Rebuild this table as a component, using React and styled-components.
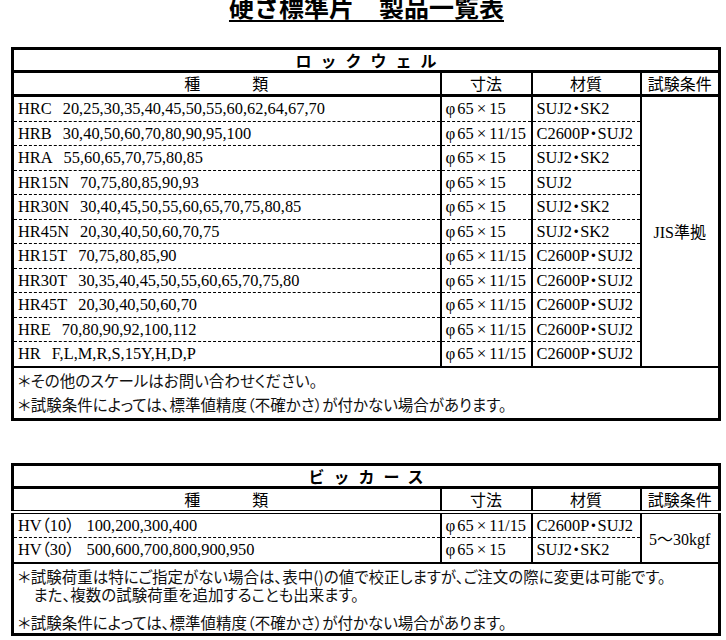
import React from 'react';
import styled, { createGlobalStyle } from 'styled-components';

const GlobalStyle = createGlobalStyle`
  html, body {
    margin: 0;
    padding: 0;
    background: #fff;
  }
  body {
    font-family: "Liberation Serif", "Noto Sans CJK JP", serif;
    color: #000;
  }
`

const Page = styled.div`
  width: 726px;
  height: 640px;
  box-sizing: border-box;
  padding-left: 11px;
  overflow: hidden;
`

const Title = styled.h1`
  margin: -6px 0 28px;
  padding-right: 4px;
  text-align: center;
  font: 700 25px/25px "Noto Sans CJK JP", sans-serif;
  text-decoration: underline;
  text-decoration-thickness: 2px;
  text-underline-offset: 3px;
`

const Sheet = styled.table`
  width: 707px;
  border-collapse: collapse;
  table-layout: fixed;
  border: 3px solid #000;
  margin-bottom: ${({ $gap = 0 }) => $gap}px;
`

const Col = styled.col`
  width: ${({ $w }) => $w}px;
`

const KindRow = styled.th`
  height: 20px;
  padding: 0 0 0 9px;
  border-bottom: 3px solid #000;
  font: 700 16px/20px "Noto Sans CJK JP", sans-serif;
  letter-spacing: 9px;
  text-align: center;
`

const HeadCell = styled.th`
  height: 21px;
  padding: 0;
  border-left: 2px solid #000;
  border-bottom: ${({ $double }) => ($double ? '4px double #000' : '3px solid #000')};
  font: 400 16px/21px "Noto Sans CJK JP", sans-serif;
  letter-spacing: ${({ $spread }) => ($spread ? '1px' : '0')};
  text-align: center;
  white-space: pre;
`

const Cell = styled.td`
  height: 23.5px;
  padding: 0 4px;
  border-left: 2px solid #000;
  border-bottom: ${({ $last }) => ($last ? '2px solid #000' : '1px dashed #000')};
  font-size: 16.4px;
  line-height: 23px;
  font-feature-settings: "palt";
  white-space: nowrap;
  overflow: hidden;
  vertical-align: middle;
`

const MergedCell = styled.td`
  padding: 0;
  border-left: 2px solid #000;
  border-bottom: 2px solid #000;
  font-size: 16px;
  text-align: center;
  vertical-align: middle;
  white-space: nowrap;
`

const Name = styled.span`
  margin-right: ${({ $gap = 11 }) => $gap}px;
`

const Phi = styled.span`
  margin-right: 2px;
  font-size: 17px;
`

const Times = styled.span`
  margin: 0 3px;
  font-size: 17px;
`

const NoteCell = styled.td`
  padding: ${({ $pad = '0' }) => $pad};
  font: 400 15.5px "Noto Sans CJK JP", sans-serif;
  font-feature-settings: "palt";
  color: #111;
`

const Note = styled.p`
  margin: ${({ $mt = 0 }) => $mt}px 0 0;
  padding-left: 4px;
  line-height: ${({ $lh = 24 }) => $lh}px;
  white-space: pre;
`

const rockwell = [
  ['HRC', '20,25,30,35,40,45,50,55,60,62,64,67,70', '65', '15', 'SUJ2・SK2'],
  ['HRB', '30,40,50,60,70,80,90,95,100', '65', '11/15', 'C2600P・SUJ2'],
  ['HRA', '55,60,65,70,75,80,85', '65', '15', 'SUJ2・SK2'],
  ['HR15N', '70,75,80,85,90,93', '65', '15', 'SUJ2'],
  ['HR30N', '30,40,45,50,55,60,65,70,75,80,85', '65', '15', 'SUJ2・SK2'],
  ['HR45N', '20,30,40,50,60,70,75', '65', '15', 'SUJ2・SK2'],
  ['HR15T', '70,75,80,85,90', '65', '11/15', 'C2600P・SUJ2'],
  ['HR30T', '30,35,40,45,50,55,60,65,70,75,80', '65', '11/15', 'C2600P・SUJ2'],
  ['HR45T', '20,30,40,50,60,70', '65', '11/15', 'C2600P・SUJ2'],
  ['HRE', '70,80,90,92,100,112', '65', '11/15', 'C2600P・SUJ2'],
  ['HR', 'F,L,M,R,S,15Y,H,D,P', '65', '11/15', 'C2600P・SUJ2'],
]

const vickers = [
  ['HV（10）', '100,200,300,400', '65', '11/15', 'C2600P・SUJ2'],
  ['HV（30）', '500,600,700,800,900,950', '65', '15', 'SUJ2・SK2'],
]

function Size({ d, t }) {
  return (
    <>
      <Phi>φ</Phi>{d}<Times>×</Times>{t}
    </>
  )
}

function Columns() {
  return (
    <colgroup>
      <Col $w={428} />
      <Col $w={91} />
      <Col $w={109} />
      <Col $w={79} />
    </colgroup>
  )
}

function Head({ kind, double }) {
  return (
    <thead>
      <tr>
        <KindRow colSpan={4}>{kind}</KindRow>
      </tr>
      <tr>
        <HeadCell $double={double} $spread>{'種　　　類'}</HeadCell>
        <HeadCell $double={double}>寸法</HeadCell>
        <HeadCell $double={double}>材質</HeadCell>
        <HeadCell $double={double}>試験条件</HeadCell>
      </tr>
    </thead>
  )
}

function Rows({ list, merged, nameGap }) {
  return list.map(([name, values, d, t, mat], idx) => {
    const last = idx === list.length - 1
    return (
      <tr key={name}>
        <Cell $last={last}>
          <Name $gap={nameGap}>{name}</Name>{values}
        </Cell>
        <Cell $last={last}><Size d={d} t={t} /></Cell>
        <Cell $last={last}>{mat}</Cell>
        {idx === 0 && <MergedCell rowSpan={list.length}>{merged}</MergedCell>}
      </tr>
    )
  })
}

export default function App() {
  return (
    <Page>
      <GlobalStyle />
      <Title>硬さ標準片　製品一覧表</Title>

      <Sheet $gap={42}>
        <Columns />
        <Head kind="ロックウェル" />
        <tbody>
          <Rows list={rockwell} merged="JIS準拠" />
          <tr>
            <NoteCell colSpan={4} $pad="0 0 1px">
              <Note $lh={24.5}>＊その他のスケールはお問い合わせください。</Note>
              <Note $lh={24.5}>＊試験条件によっては、標準値精度（不確かさ）が付かない場合があります。</Note>
            </NoteCell>
          </tr>
        </tbody>
      </Sheet>

      <Sheet>
        <Columns />
        <Head kind="ビッカース" double />
        <tbody>
          <Rows list={vickers} merged="5〜30kgf" nameGap={12} />
          <tr>
            <NoteCell colSpan={4} $pad="3px 0 2px">
              <Note $lh={18.5}>{'＊試験荷重は特にご指定がない場合は、表中()の値で校正しますが、ご注文の際に変更は可能です。\n　また、複数の試験荷重を追加することも出来ます。'}</Note>
              <Note $lh={18.5} $mt={9}>＊試験条件によっては、標準値精度（不確かさ）が付かない場合があります。</Note>
            </NoteCell>
          </tr>
        </tbody>
      </Sheet>
    </Page>
  )
}
